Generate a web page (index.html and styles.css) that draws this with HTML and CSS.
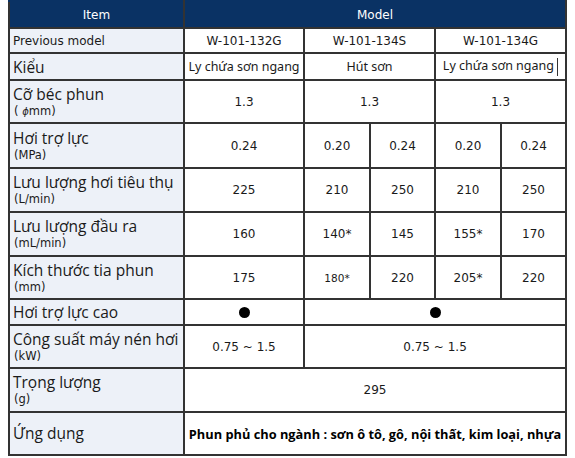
FILE: index.html
```html
<!DOCTYPE html>
<html lang="vi">
<head>
<meta charset="utf-8">
<link rel="stylesheet" href="styles.css">
</head>
<body>
<table class="spec">
  <colgroup>
    <col class="c-label"><col class="c-a"><col class="c-b"><col class="c-c"><col class="c-b"><col class="c-c">
  </colgroup>
  <tr class="r-head">
    <th>Item</th>
    <th colspan="5">Model</th>
  </tr>
  <tr class="r-25">
    <td class="lbl small-lbl">Previous model</td>
    <td class="val">W-101-132G</td>
    <td class="val" colspan="2">W-101-134S</td>
    <td class="val" colspan="2">W-101-134G</td>
  </tr>
  <tr class="r-27">
    <td class="lbl">Kiểu</td>
    <td class="val vn">Ly chứa sơn ngang</td>
    <td class="val vn" colspan="2">Hút sơn</td>
    <td class="val vn" colspan="2">Ly chứa sơn ngang <span class="caret"></span></td>
  </tr>
  <tr class="r-43">
    <td class="lbl"><div class="big">Cỡ béc phun</div><div class="unit">( <i class="phi">ϕ</i>mm)</div></td>
    <td class="val">1.3</td>
    <td class="val" colspan="2">1.3</td>
    <td class="val" colspan="2">1.3</td>
  </tr>
  <tr class="r-45">
    <td class="lbl"><div class="big">Hơi trợ lực</div><div class="unit">(MPa)</div></td>
    <td class="val">0.24</td>
    <td class="val">0.20</td>
    <td class="val">0.24</td>
    <td class="val">0.20</td>
    <td class="val">0.24</td>
  </tr>
  <tr class="r-44">
    <td class="lbl"><div class="big">Lưu lượng hơi tiêu thụ</div><div class="unit">(L/min)</div></td>
    <td class="val">225</td>
    <td class="val">210</td>
    <td class="val">250</td>
    <td class="val">210</td>
    <td class="val">250</td>
  </tr>
  <tr class="r-44">
    <td class="lbl"><div class="big">Lưu lượng đầu ra</div><div class="unit">(mL/min)</div></td>
    <td class="val">160</td>
    <td class="val">140*</td>
    <td class="val">145</td>
    <td class="val">155*</td>
    <td class="val">170</td>
  </tr>
  <tr class="r-43">
    <td class="lbl"><div class="big">Kích thước tia phun</div><div class="unit">(mm)</div></td>
    <td class="val">175</td>
    <td class="val tiny">180*</td>
    <td class="val">220</td>
    <td class="val">205*</td>
    <td class="val">220</td>
  </tr>
  <tr class="r-26">
    <td class="lbl"><div class="big">Hơi trợ lực cao</div></td>
    <td class="val"><span class="dot"></span></td>
    <td class="val" colspan="4"><span class="dot"></span></td>
  </tr>
  <tr class="r-43">
    <td class="lbl tight"><div class="big">Công suất máy nén hơi</div><div class="unit">(kW)</div></td>
    <td class="val">0.75 ~ 1.5</td>
    <td class="val" colspan="4">0.75 ~ 1.5</td>
  </tr>
  <tr class="r-44">
    <td class="lbl"><div class="big">Trọng lượng</div><div class="unit">(g)</div></td>
    <td class="val" colspan="5">295</td>
  </tr>
  <tr class="r-43">
    <td class="lbl"><div class="big">Ứng dụng</div></td>
    <td class="val app" colspan="5">Phun phủ cho ngành : sơn ô tô, gô, nội thất, kim loại, nhựa</td>
  </tr>
</table>
</body>
</html>
```

FILE: styles.css
```css
html, body {
  margin: 0;
  padding: 0;
  background: #ffffff;
}
body {
  padding-left: 8px;
}
.spec {
  border-collapse: collapse;
  table-layout: fixed;
  width: 557px;
  font-family: "DejaVu Sans", Verdana, sans-serif;
  font-size: 12px;
  color: #1a1a1a;
}
.c-label { width: 175px; }
.c-a { width: 120px; }
.c-b { width: 66px; }
.c-c { width: 65px; }

.spec th, .spec td {
  border: 2px solid #333333;
  padding: 0;
  overflow: hidden;
}
.spec th {
  background: #0a3264;
  color: #ffffff;
  font-weight: normal;
  font-size: 12px;
  text-align: center;
  border-color: #0a3264 #333333 #333333 #333333;
}
.r-head { height: 27px; }
.r-25 { height: 25px; }
.r-26 { height: 26px; }
.r-27 { height: 27px; }
.r-43 { height: 43px; }
.r-44 { height: 44px; }
.r-45 { height: 45px; }

.lbl {
  background: #edf1f8;
  text-align: left;
  padding-left: 3px !important;
  vertical-align: middle;
  font-family: "Open Sans", "Noto Sans", sans-serif;
  font-size: 15.5px;
  color: #1a1a1a;
}
.small-lbl {
  font-family: "DejaVu Sans", Verdana, sans-serif;
  font-size: 12px;
}
.big {
  font-size: 15.5px;
  line-height: 19px;
}
.unit {
  font-family: "DejaVu Sans", Verdana, sans-serif;
  font-size: 11.5px;
  line-height: 15px;
  padding-left: 1px;
}
.tight .big { line-height: 19px; }
.tight .unit { line-height: 14px; }
.phi { font-size: 10px; }

.val {
  background: #ffffff;
  text-align: center;
  vertical-align: middle;
}
.vn {
  font-family: "Noto Sans", "Open Sans", sans-serif;
  font-size: 12.5px;
}
.tiny { font-size: 10.5px; }
.caret {
  display: inline-block;
  width: 1px;
  height: 18px;
  background: #333;
  vertical-align: middle;
}
.dot {
  display: inline-block;
  width: 11px;
  height: 11px;
  border-radius: 50%;
  background: #000;
  vertical-align: middle;
}
.app {
  font-family: "Open Sans", "Noto Sans", sans-serif;
  font-weight: bold;
  font-size: 12.8px;
  color: #000;
  white-space: nowrap;
}
```
